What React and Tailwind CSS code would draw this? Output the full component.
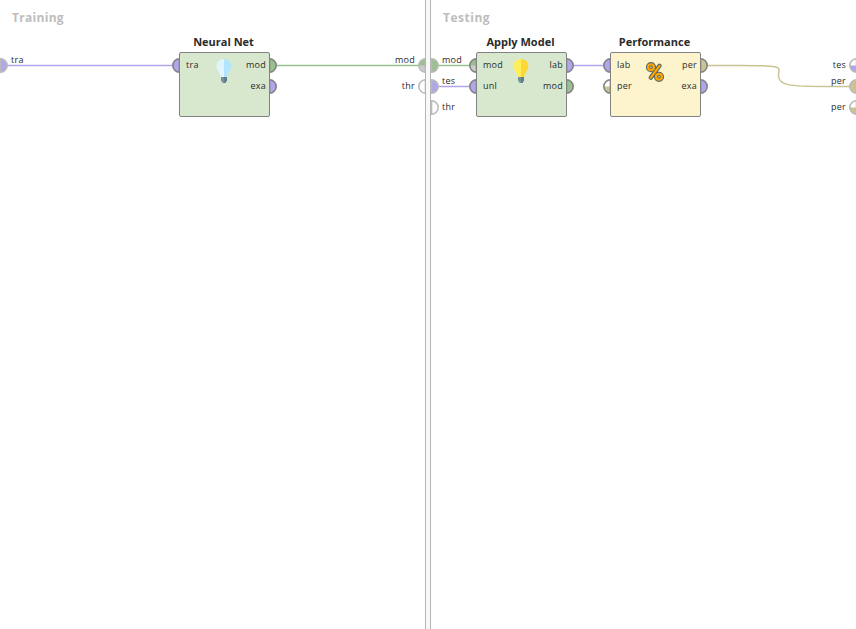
import React from 'react';

const PURPLE = '#b1a5ec';
const GREEN = '#9bc08f';
const SAND = '#cbc492';
const NODE_RIM = '#828282';
const EDGE_RIM = '#bababa';

// Half-round connector; `base` fills it and `top` recolours its upper half.
function Port({ x, y, side, base, top, rim = NODE_RIM }) {
  const s = side === 'left' ? -1 : 1;
  const sweep = s === 1 ? 1 : 0;
  return (
    <g>
      <path d={`M${x} ${y - 6.7}A6.7 6.7 0 0 ${sweep} ${x} ${y + 6.7}Z`} fill={base} />
      {top && <path d={`M${x} ${y - 6.7}A6.7 6.7 0 0 ${sweep} ${x + s * 6.7} ${y}H${x}Z`} fill={top} />}
      <path d={`M${x} ${y - 6.7}A6.7 6.7 0 0 ${sweep} ${x} ${y + 6.7}Z`} fill="none" stroke={rim} strokeWidth="1.6" />
    </g>
  );
}

function Bulb({ light, dark }) {
  return (
    <svg viewBox="0 0 16 24" className="h-6 w-4">
      <path d="M8 0C3.700 0 .6 3 .6 7c0 4.600 3.400 6 4.200 11H8z" fill={light} />
      <path d="M8 0c4.300 0 7.400 3 7.400 7 0 4.600-3.400 6-4.200 11H8z" fill={dark} />
      <path d="M5 18h6v4.300H9.800V24H6.200v-1.700H5z" fill="#78909c" />
      <path d="M8 18h3v4.300H9.800V24H8z" fill="#607d8b" />
    </svg>
  );
}

function Percent() {
  const shape = (
    <>
      <circle cx="6" cy="6.200" r="2.900" />
      <circle cx="14" cy="15.800" r="2.900" />
      <path d="M14.500 4.800 5.800 16.600" />
    </>
  );
  return (
    <svg viewBox="0 0 20 22" className="h-[22px] w-5" fill="none" strokeLinecap="round">
      <g stroke="#55696a" strokeWidth="4.400">{shape}</g>
      <g stroke="#ffa500" strokeWidth="2.200">{shape}</g>
    </svg>
  );
}

const Label = ({ children }) => (
  <span className="block h-[21px] text-[9px] leading-[21px] tracking-[0.25px]">{children}</span>
);

function Operator({ title, place, color, inputs, outputs, children }) {
  return (
    <section className={`absolute top-[35px] w-[91px] ${place}`}>
      <h2 className="-ml-[22px] -mr-5 h-[17px] text-center text-[11px] font-bold leading-[13px] whitespace-nowrap">{title}</h2>
      <div className={`flex h-[65px] justify-between rounded-[2px] border border-[#828282] pr-[3px] pl-1.5 pt-px ${color}`}>
        <div className="w-6">{inputs.map((t) => <Label key={t}>{t}</Label>)}</div>
        <div className="flex h-[29px] w-6 items-end justify-center">{children}</div>
        <div className="w-7 text-right">{outputs.map((t) => <Label key={t}>{t}</Label>)}</div>
      </div>
    </section>
  );
}

const EdgeLabel = ({ place, children }) => (
  <span className={`absolute text-[9px] leading-3 tracking-[0.25px] ${place}`}>{children}</span>
);

export default function App() {
  return (
    <main className="flex h-[629px] w-[856px] overflow-hidden bg-white font-['Open_Sans',sans-serif] text-[#2b2b2b]">
      <section className="relative w-[425px] shrink-0 overflow-hidden">
        <h1 className="pt-2 pl-3 text-[12px] font-bold leading-5 tracking-[0.3px] text-[#bdbdbd]">Training</h1>
        <svg className="absolute inset-0" width="425" height="629" fill="none">
          <path d="M7 65.500H173" stroke={PURPLE} strokeWidth="1.500" />
          <path d="M276 65.500H419" stroke={GREEN} strokeWidth="1.500" />
          <Port x={0.5} y={65.5} side="right" base={PURPLE} rim={EDGE_RIM} />
          <Port x={179.5} y={65.5} side="left" base={PURPLE} />
          <Port x={269.5} y={65.5} side="right" base={GREEN} />
          <Port x={269.5} y={86.5} side="right" base={PURPLE} />
          <Port x={425.5} y={65.5} side="left" base="#cccccc" top={GREEN} rim={EDGE_RIM} />
          <Port x={425.5} y={86.5} side="left" base="#ffffff" rim={EDGE_RIM} />
        </svg>
        <EdgeLabel place="left-[11px] top-[54px]">tra</EdgeLabel>
        <EdgeLabel place="right-[10px] top-[54px]">mod</EdgeLabel>
        <EdgeLabel place="right-[10px] top-20">thr</EdgeLabel>
        <Operator title="Neural Net" place="left-[179px]" color="bg-[#d8e8ce]" inputs={['tra']} outputs={['mod', 'exa']}>
          <Bulb light="#e1f5fe" dark="#b3e5fc" />
        </Operator>
      </section>

      <div className="w-1.5 shrink-0 border-x border-[#b5b5b5] bg-[#f8f8f8]" />

      <section className="relative w-[425px] shrink-0 overflow-hidden">
        <h1 className="pt-2 pl-3 text-[12px] font-bold leading-5 tracking-[0.5px] text-[#bdbdbd]">Testing</h1>
        <svg className="absolute inset-0" width="425" height="629" fill="none">
          <path d="M7 65.500H39" stroke={GREEN} strokeWidth="1.500" />
          <path d="M7 86.500H39M142 65.500H173" stroke={PURPLE} strokeWidth="1.500" />
          <path d="M276 65.500H310C357 65.500 347 67 347.500 76C348 85 357 86.500 395 86.500H419" stroke={SAND} strokeWidth="1.500" />
          <Port x={0.5} y={65.5} side="right" base={GREEN} rim={EDGE_RIM} />
          <Port x={0.5} y={86.5} side="right" base={PURPLE} rim={EDGE_RIM} />
          <Port x={0.5} y={107.5} side="right" base="#ffffff" rim={EDGE_RIM} />
          <Port x={45.5} y={65.5} side="left" base="#cccccc" top={GREEN} />
          <Port x={45.5} y={86.5} side="left" base={PURPLE} />
          <Port x={135.5} y={65.5} side="right" base={PURPLE} />
          <Port x={135.5} y={86.5} side="right" base={GREEN} />
          <Port x={179.5} y={65.5} side="left" base={PURPLE} />
          <Port x={179.5} y={86.5} side="left" base={SAND} top="#ffffff" />
          <Port x={269.5} y={65.5} side="right" base={SAND} />
          <Port x={269.5} y={86.5} side="right" base={PURPLE} />
          <Port x={425.5} y={65.5} side="left" base={PURPLE} top="#ffffff" rim={EDGE_RIM} />
          <Port x={425.5} y={86.5} side="left" base={SAND} rim={EDGE_RIM} />
          <Port x={425.5} y={107.5} side="left" base={SAND} top="#ffffff" rim={EDGE_RIM} />
        </svg>
        <EdgeLabel place="left-[11px] top-[54px]">mod</EdgeLabel>
        <EdgeLabel place="left-[11px] top-[75px]">tes</EdgeLabel>
        <EdgeLabel place="left-[11px] top-[101px]">thr</EdgeLabel>
        <EdgeLabel place="right-[10px] top-[59px]">tes</EdgeLabel>
        <EdgeLabel place="right-[10px] top-[75px]">per</EdgeLabel>
        <EdgeLabel place="right-[10px] top-[101px]">per</EdgeLabel>
        <Operator title="Apply Model" place="left-[45px]" color="bg-[#d8e8ce]" inputs={['mod', 'unl']} outputs={['lab', 'mod']}>
          <Bulb light="#ffee58" dark="#fdd835" />
        </Operator>
        <Operator title="Performance" place="left-[179px]" color="bg-[#fdf4ce]" inputs={['lab', 'per']} outputs={['per', 'exa']}>
          <Percent />
        </Operator>
      </section>
    </main>
  );
}
